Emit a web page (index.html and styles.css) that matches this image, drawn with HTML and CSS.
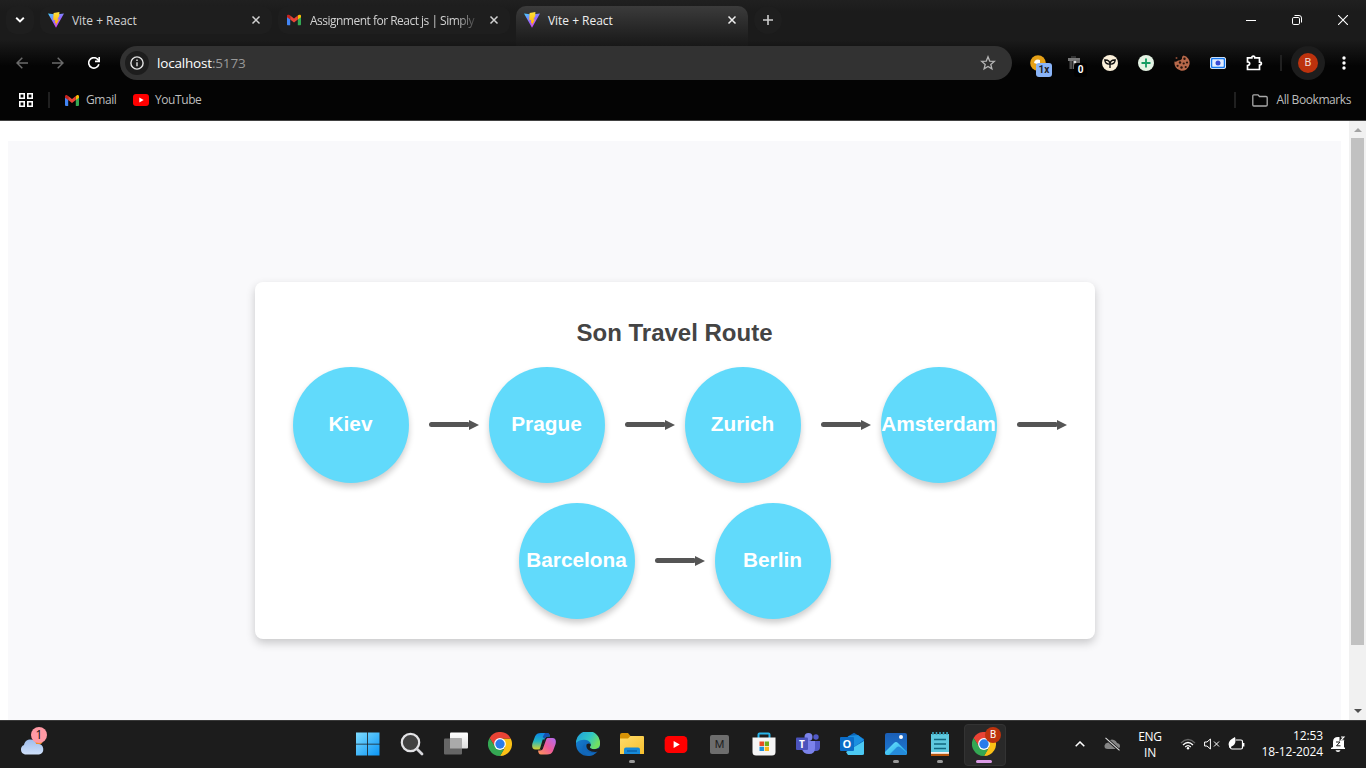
FILE: index.html
```html
<!DOCTYPE html>
<html lang="en">
<head>
<meta charset="utf-8">
<title>Vite + React</title>
<link rel="stylesheet" href="styles.css">
</head>
<body>
<svg class="defs" width="0" height="0" aria-hidden="true">
  <defs>
    <linearGradient id="va" x1="0" y1="0" x2=".6" y2="1"><stop offset="0" stop-color="#41d1ff"/><stop offset=".6" stop-color="#9a63ff"/><stop offset="1" stop-color="#d03cff"/></linearGradient>
    <linearGradient id="vb" x1="0" y1="0" x2="0" y2="1"><stop offset="0" stop-color="#ffe23a"/><stop offset="1" stop-color="#ffa800"/></linearGradient>
    <linearGradient id="win" x1="0" y1="0" x2="1" y2="1"><stop offset="0" stop-color="#7fdcff"/><stop offset="1" stop-color="#0a95f5"/></linearGradient>
    <linearGradient id="cloud" x1="0" y1="0" x2="0" y2="1"><stop offset="0" stop-color="#9fbdec"/><stop offset="1" stop-color="#cfe0fa"/></linearGradient>
    <linearGradient id="cpa" x1="0" y1="0" x2="0" y2="1"><stop offset="0" stop-color="#0a84e8"/><stop offset=".5" stop-color="#22b6c0"/><stop offset="1" stop-color="#d7d330"/></linearGradient>
    <linearGradient id="cpb" x1="1" y1="0" x2="0" y2="1"><stop offset="0" stop-color="#b06cf4"/><stop offset=".5" stop-color="#ee5b9b"/><stop offset="1" stop-color="#ff9a52"/></linearGradient>
    <linearGradient id="ea" x1="0" y1="0" x2="1" y2=".5"><stop offset="0" stop-color="#1c9be0"/><stop offset=".6" stop-color="#30c6c4"/><stop offset="1" stop-color="#72e060"/></linearGradient>
    <linearGradient id="eb" x1="0" y1="0" x2="1" y2="1"><stop offset="0" stop-color="#1787da"/><stop offset="1" stop-color="#0b4f9e"/></linearGradient>
    <linearGradient id="fo" x1="0" y1="0" x2="1" y2="1"><stop offset="0" stop-color="#ffdc6b"/><stop offset="1" stop-color="#f7bf2d"/></linearGradient>
    <linearGradient id="ph" x1="0" y1="0" x2="0" y2="1"><stop offset="0" stop-color="#1b5eb5"/><stop offset="1" stop-color="#1c7ad4"/></linearGradient>
    <linearGradient id="ph2" x1="0" y1="0" x2="1" y2="1"><stop offset="0" stop-color="#6fe3ff"/><stop offset="1" stop-color="#1aa6e6"/></linearGradient>
    <linearGradient id="tv" x1="0" y1="0" x2="0" y2="1"><stop offset="0" stop-color="#fff"/><stop offset="1" stop-color="#ddd"/></linearGradient>
    <symbol id="vite" viewBox="0 0 16 16"><path d="M0 1.4 8 15.8 16 1.4 8 2.6z" fill="url(#va)"/><path d="M11.4 0 5.6 1 5.2 8.2 7.2 7.8 6.8 11.2 8 10.8 7.6 14 11 7.4 9.3 7.6 11.2 4z" fill="url(#vb)"/></symbol>
    <symbol id="gmail" viewBox="0 0 14 11"><path d="M0 1.6V10a1 1 0 0 0 1 1h2.2V4z" fill="#4285f4"/><path d="M14 1.6V10a1 1 0 0 1-1 1h-2.2V4z" fill="#34a853"/><path d="M10.8 1 12 .2c.9-.6 2 0 2 1.2v1.3l-3.2 2.4z" fill="#fbbc04"/><path d="M3.2 1 2 .2C1.1-.4 0 .2 0 1.4v1.3l3.2 2.4z" fill="#c5221f"/><path d="M3.2 1 7 3.9 10.8 1v4.1L7 8 3.2 5.1z" fill="#ea4335"/></symbol>
    <symbol id="yt" viewBox="0 0 24 18"><rect width="24" height="18" rx="4.5" fill="#f00"/><path d="M9.5 5.2v7.6l6.5-3.8z" fill="#fff"/></symbol>
    <symbol id="chrome" viewBox="0 0 24 24"><path d="M12 6.5H22.7A12 12 0 0 1 12 24l5-9z" fill="#fbc116"/><path d="M1.6 6A12 12 0 0 1 22.7 6.5H12L7 14.8z" fill="#ea4335"/><path d="M1.6 6 7.2 14.8 12 17.5h4L12 24A12 12 0 0 1 1.6 6z" fill="#34a853"/><circle cx="12" cy="12" r="5.9" fill="#fff"/><circle cx="12" cy="12" r="4.7" fill="#2a7bea"/></symbol>
    <symbol id="x" viewBox="0 0 10 10"><path d="m1.500 1.500 7 7m0-7-7 7" stroke="currentColor" stroke-width="1.500"/></symbol>
  </defs>
</svg>
<div class="screen">
  <header class="browser">
    <div class="tabs">
      <button class="search"><svg width="10" height="6" viewBox="0 0 10 6"><path d="m1.200.8L5 4.500 8.800.8" fill="none" stroke="#fff" stroke-width="1.900"/></svg></button>
      <div class="tab"><svg class="fav"><use href="#vite"/></svg><span class="name">Vite + React</span><svg class="close"><use href="#x"/></svg></div>
      <div class="tab"><svg class="fav g" viewBox="-1 -2.5 16 16"><use href="#gmail" width="14" height="11"/></svg><span class="name fade">Assignment for React js | Simply</span><svg class="close"><use href="#x"/></svg></div>
      <div class="tab active"><svg class="fav"><use href="#vite"/></svg><span class="name">Vite + React</span><svg class="close"><use href="#x"/></svg></div>
      <button class="plus"><svg width="12" height="12" viewBox="0 0 12 12"><path d="M6 1v10M1 6h10" stroke="#ccc" stroke-width="1.6"/></svg></button>
      <div class="winctl">
        <svg width="10" height="10"><path d="M0 5.5h10" stroke="#fff"/></svg>
        <svg width="10" height="10" fill="none" stroke="#fff"><rect x=".5" y="2.5" width="7" height="7" rx="1.3"/><path d="M2.5.5H7A2.5 2.5 0 0 1 9.5 3v4.5"/></svg>
        <svg width="10" height="10"><path d="m0 0 10 10m0-10L0 10" stroke="#fff" stroke-width="1.1"/></svg>
      </div>
    </div>
    <div class="toolbar">
      <div class="nav">
        <svg width="12" height="12" fill="none" stroke="#6b6b6b" stroke-width="1.5"><path d="M12 6H1.2M6.3.7 1 6l5.3 5.3"/></svg>
        <svg width="12" height="12" fill="none" stroke="#6b6b6b" stroke-width="1.5"><path d="M0 6h10.8M5.7.7 11 6l-5.3 5.3"/></svg>
        <svg width="12" height="12" fill="none" stroke="#fff" stroke-width="1.6"><path d="M10.900 7.300A5.200 5.200 0 1 1 9.800 2.400L11 3.800"/><path d="M11.200 0v4.400H7"/></svg>
      </div>
      <div class="omnibox">
        <span class="info"><svg width="14" height="14" fill="none" stroke="#e3e3e3" stroke-width="1.4"><circle cx="7" cy="7" r="6.1"/><path d="M7 6.200v4M7 3.600v1.500"/></svg></span>
        <span class="url">localhost<i>:5173</i></span>
        <svg class="star" width="16" height="16" viewBox="0 0 16 16"><path d="m8 1.800 1.700 4.300 4.600.3-3.500 3 1.100 4.500L8 11.400l-3.900 2.500 1.100-4.500-3.500-3 4.600-.3z" fill="none" stroke="#b5b5b5" stroke-width="1.300"/></svg>
      </div>
      <div class="ext">
        <div class="cell"><svg width="16" height="16"><circle cx="8" cy="8" r="7.8" fill="#e6a117"/><path d="M4 8a4 4 0 0 1 6-3v5z" fill="#fff"/></svg><b class="badge blue">1x</b></div>
        <div class="cell"><svg width="14" height="16"><path d="M4 1h5v2H4z" fill="#333"/><path d="M1 3h12v3H1z" fill="#777"/><path d="M2.500 6h3v8h-3z" fill="#4e4e4e"/><path d="M6 5h7v9H6z" fill="#696969"/><circle cx="8" cy="7" r="1.300" fill="#ddd"/></svg><b class="badge black">0</b></div>
        <div class="cell"><svg width="16" height="16" fill="none" stroke="#111" stroke-width="1.400"><circle cx="8" cy="8" r="8" fill="#fbf0da" stroke="none"/><path d="M8 13V9M8 9C4.500 9.500 3 7.500 2.800 5 6 4.800 7.800 6.500 8 9zM8 9c3.500.5 5-1.500 5.200-4C10 4.800 8.200 6.500 8 9z"/></svg></div>
        <div class="cell"><svg width="16" height="16"><circle cx="8" cy="8" r="8" fill="#e4f3e4"/><path d="M8 3.500v9M3.500 8h9" stroke="#159c63" stroke-width="1.800"/></svg></div>
        <div class="cell"><svg width="16" height="16"><path d="M8 4Q7.500 1.500 9.500.600A7.600 7.600 0 1 1 .6 6.500Q3 7 4 5.500 5.500 6 8 4z" fill="#b7684a"/><circle cx="2.500" cy="3" r="1" fill="#8a4b35"/><g fill="#26130c"><circle cx="10.500" cy="3.800" r="1.200"/><circle cx="6" cy="7.500" r="1.200"/><circle cx="13" cy="7.500" r="1.100"/><circle cx="9.700" cy="8.500" r="1.100"/><circle cx="3.600" cy="10.800" r="1.100"/><circle cx="7.500" cy="12.500" r="1.200"/><circle cx="11.700" cy="12" r="1.100"/></g></svg></div>
        <div class="cell"><svg width="16" height="14"><rect x="0" y="1" width="16" height="12" rx="2.5" fill="#fff"/><rect x="1.5" y="2.5" width="13" height="9" rx="1.2" fill="#e3edff" stroke="#1677ee" stroke-width="1.5"/><circle cx="8" cy="7" r="2.5" fill="#3b4bd4"/></svg></div>
        <div class="cell"><svg width="17" height="16" fill="none" stroke="#fff" stroke-width="1.7"><path d="M1.500 2.800h4.300C5.800.5 8.800.5 8.800 2.800h4.700v4.300c2.500 0 2.500 3 0 3v4.400h-12v-4C4.400 10.200 4.400 6.800 1.500 6.800z"/></svg></div>
      </div>
      <span class="sep t"></span>
      <div class="profile"><b>B</b></div>
      <svg class="dots" width="4" height="14" fill="#fff"><circle cx="2" cy="2" r="1.7"/><circle cx="2" cy="7" r="1.7"/><circle cx="2" cy="12" r="1.7"/></svg>
    </div>
    <div class="marks">
      <svg class="apps" width="14" height="14" fill="none" stroke="#fff" stroke-width="1.6"><path d="M.8.8h4.400v4.400H.8zM8.800.8h4.400v4.400H8.800zM.8 8.800h4.400v4.400H.8zM8.800 8.800h4.400v4.400H8.800z"/></svg>
      <span class="sep"></span>
      <svg class="gm" width="14" height="11"><use href="#gmail"/></svg><span class="mk gmt">Gmail</span>
      <svg class="ytm" width="16" height="12"><use href="#yt"/></svg><span class="mk">YouTube</span>
      <span class="grow"></span>
      <span class="sep"></span>
      <svg class="folder" width="16" height="13" fill="none" stroke="#a9a9a9" stroke-width="1.3"><path d="M.8 11V1.700Q.8.8 1.700.8H6l1.500 1.700H14q1.200 0 1.200 1.100V11q0 1-1.200 1H1.800q-1 0-1-1z"/></svg><span class="mk all">All Bookmarks</span>
    </div>
  </header>

  <div class="viewport">
    <main class="app">
      <section class="card">
        <h2>Son Travel Route</h2>
        <div class="route">
          <div class="stop"><div class="city">Kiev</div><div class="arrow"></div></div>
          <div class="stop"><div class="city">Prague</div><div class="arrow"></div></div>
          <div class="stop"><div class="city">Zurich</div><div class="arrow"></div></div>
          <div class="stop"><div class="city">Amsterdam</div><div class="arrow"></div></div>
          <div class="stop"><div class="city">Barcelona</div><div class="arrow"></div></div>
          <div class="stop"><div class="city">Berlin</div></div>
        </div>
      </section>
    </main>
    <div class="scroll"><i class="up"></i><span class="thumb"></span><i class="down"></i></div>
  </div>

  <footer class="taskbar">
    <div class="weather"><svg width="24" height="20" viewBox="0 0 24 20"><circle cx="18" cy="5" r="5" fill="#f28c28"/><path d="M5 19.500a5 5 0 0 1-1-9.500C5 6 7 4.500 10.500 4.500c3 0 5 1.500 5.600 4.500H18a5.300 5.300 0 0 1 1 10.500z" fill="url(#cloud)"/></svg><span class="count">1</span></div>
    <div class="pins">
      <div class="pin"><svg width="24" height="24" fill="url(#win)"><path d="M0 .5h11.200v11.200H0zM12 .5h11.500v11.200H12zM0 12.500h11.200v11H0zM12 12.500h11.500v11H12z"/></svg></div>
      <div class="pin"><svg width="24" height="24"><circle cx="10.500" cy="10.500" r="8.700" fill="#414141" stroke="#e2e2e5" stroke-width="2.200"/><path d="m17 17 5 5" stroke="#d6d6da" stroke-width="2.800" stroke-linecap="round"/></svg></div>
      <div class="pin"><svg width="24" height="24"><rect x="6" y=".5" width="18" height="16" rx="1" fill="url(#tv)"/><rect y="6.500" width="18" height="16" rx="1" fill="#666"/><path d="M6 6.500h12v10H6z" fill="#aaa"/></svg></div>
      <div class="pin"><svg width="24" height="24"><use href="#chrome"/></svg></div>
      <div class="pin"><svg width="24" height="24"><path d="M9 1h6c2 0 2.500 1.500 3 3.500h-2c-2 0-2.800 1.300-3.300 3L10 15.500c-.5 1.800-1.300 2-2.500 2H3.500C.5 17.500-.4 15 .4 11.500L3 4.500C4 2 6 1 9 1z" fill="url(#cpa)"/><path d="M13 1h2c2 0 2.500 1.500 3 3.500h-2c-2 0-2.800 1-3.300 2.500L10.700 5z" fill="#174eb0"/><path d="M15 22.500H9c-2 0-2.500-1.500-3-4h2c2 0 2.800-1.300 3.300-3L14 8c.5-1.800 1.300-2 2.500-2h4c3 0 3.900 2.500 3.100 6L21 19c-1 2.500-3 3.500-6 3.500z" fill="url(#cpb)"/><path d="m10.700 7.500-2.500 8.500q-.3 1.300-1.600 1.500h3.200l3.300-10z" fill="#1d1d1d"/></svg></div>
      <div class="pin"><svg width="24" height="24"><circle cx="12" cy="12" r="12" fill="url(#eb)"/><path d="M0 11A12 12 0 0 1 24 11c.3 4-2.500 6-6 6-2.500 0-4.500-1-4-2.200 1-1 1-2 .7-3C13.500 7.500 5 6 0 11z" fill="url(#ea)"/><path d="M9 12c-2 6 3.500 10.500 11.500 8.500A12 12 0 0 1 13 24C6 22 4.500 15 9 12z" fill="#1268ba"/><path d="M10.500 12.500q2-1.500 4-.5.700 1.500-.5 2.800c-.7 2.200 4 3.500 8.500 1.500l1.500 1-2.500 2.500C15 20.500 9.500 18 10.500 12.500z" fill="#1d1d1d"/></svg></div>
      <div class="pin run"><svg width="24" height="24"><path d="M0 3q0-2 2-2h6l2.500 3H20v6H0z" fill="#d69205"/><path d="M0 6.500h8L10.500 4H23q1 0 1 1v17H0z" fill="url(#fo)"/><path d="M4 22v-4.500q0-2 2-2h12q2 0 2 2V22z" fill="#1689d8"/><path d="M7 19h10" stroke="#0b5fa6" stroke-width="1.400"/></svg></div>
      <div class="pin"><svg width="24" height="17"><use href="#yt"/></svg></div>
      <div class="pin"><span class="m">M</span></div>
      <div class="pin"><svg width="24" height="24"><path d="M6.500 6V2.500q0-1 1-1h9q1 0 1 1V6" fill="none" stroke="#27b4ea" stroke-width="2"/><path d="M.5 5.500h23V20q0 3.500-3.500 3.500H4Q.5 23.500.5 20z" fill="#f5f5f5"/><path d="M7.500 9.500H12V14H7.500z" fill="#e94c26"/><path d="M12.700 9.500H17V14h-4.300z" fill="#6fae1d"/><path d="M7.500 14.700H12V19H7.500z" fill="#1d91dd"/><path d="M12.700 14.700H17V19h-4.300z" fill="#f7b71a"/></svg></div>
      <div class="pin"><svg width="24" height="24"><circle cx="20" cy="5" r="2.700" fill="#5159c7"/><path d="M16 9h8v6q0 4-4 4h-4z" fill="#5159c7"/><circle cx="12.500" cy="5" r="4" fill="#7b83eb"/><path d="M6 9h13v7q0 6-6 6t-7-5z" fill="#7b83eb"/><rect y="5.500" width="12" height="12.500" rx="1" fill="#4b53bc"/><text x="6" y="15.500" class="ico-t" font-size="10">T</text></svg></div>
      <div class="pin"><svg width="24" height="24"><path d="M4 7 14 .8 24 7v14.500q0 1-1 1H8z" fill="#0a64b8"/><path d="m8 4 10-1 6 5-10 7z" fill="#1b8fe0"/><path d="M24 9v12.500q0 1.500-2 1.500H8l-2-3z" fill="#4cc9f2"/><rect y="5" width="14" height="14" rx="1" fill="#0b6cc7"/><text x="7" y="16" class="ico-t" font-size="11">O</text></svg></div>
      <div class="pin run"><svg width="24" height="24"><rect x="1" y="1" width="22" height="22" rx="2" fill="url(#ph)"/><path d="m1 20 9-9q2-2 4 0l9 9v1q0 2-2 2H3q-2 0-2-2z" fill="url(#ph2)"/><path d="m5 23 8-8q1.500-1 3 0l7 6q-.5 2-2 2z" fill="#258bda"/><circle cx="17" cy="5" r="2" fill="#fff"/></svg></div>
      <div class="pin run"><svg width="24" height="24"><path d="M3 2h18v20H3z" fill="#5fc9df"/><path d="M3 20h18v2H3z" fill="#f4f4f4"/><path d="M3 21.800h18V24H3z" fill="#b8560c"/><path d="M5 0v3m3.500-3v3M12 0v3m3.500-3v3M19 0v3" stroke="#3aa5be" stroke-width="1.600"/><path d="M6 7.500h12M6 12h12M6 16.500h12" stroke="#12677f" stroke-width="1.700"/></svg></div>
      <div class="pin current"><svg width="24" height="24"><use href="#chrome"/></svg><b class="user">B</b></div>
    </div>
    <div class="tray">
      <svg width="10" height="6"><path d="M.7 5.300 5 1l4.300 4.300" fill="none" stroke="#fff" stroke-width="1.500"/></svg>
      <svg class="od" width="17" height="14"><path d="M4 12q-4 0-3.500-3.500Q1 6 4 5.500 6 1.500 10 3q2.500 1 3 3 3 .5 3 3t-3 3z" fill="#858585"/><path d="m1.500 1 14 12.500" stroke="#1d1d1d" stroke-width="3"/><path d="m1.500.8 14 12.500" stroke="#ddd" stroke-width="1.100"/></svg>
      <span class="lang">ENG<br>IN</span>
      <svg class="wifi" width="16" height="12" fill="none" stroke="#fff" stroke-width="1.300"><path d="M1 5q7-7 14 0" stroke="#666"/><path d="M3 7q5-5 10 0M5.200 9q2.800-2.800 5.600 0"/><circle cx="8" cy="10.300" r="1.200" fill="#fff" stroke="none"/></svg>
      <svg class="vol" width="16" height="12" fill="none" stroke="#fff"><path d="M.6 4H3l3.400-3v10L3 8H.6zM10 3.500l5 5m0-5-5 5"/></svg>
      <svg class="bat" width="17" height="14" fill="none" stroke="#fff" stroke-width="1.200"><path d="M8 3h5q1.500 0 1.500 1.500v6Q14.500 12 13 12H4q-1.500 0-1.500-1.500V9"/><path d="M15.500 6v3.500" stroke-width="1.800"/><path d="M1 9q-2-5 6-9Q9 7 3.500 9.500L1 11" fill="#fff" stroke="none"/></svg>
      <span class="clock">12:53<br>18-12-2024</span>
      <svg class="bell" width="15" height="16"><path d="M2 11V6q0-5 5-5h1.500v4H13v6l1 1v1H0v-1z" fill="#fff"/><path d="M4.500 14.200h5q-.5 1.800-2.500 1.800t-2.500-1.800z" fill="#fff"/><path d="M10 1h3l-3 3.200h3.200" fill="none" stroke="#fff" stroke-width="1.100"/><path d="M5 6h4L5.500 9.800H9.500" fill="none" stroke="#1d1d1d"/></svg>
    </div>
  </footer>
</div>
</body>
</html>
```
FILE: styles.css
```css
* { box-sizing: border-box; }
body { margin: 0; overflow: hidden; font: 12px "Open Sans", "Noto Sans", sans-serif; }
svg { display: block; flex: none; }
.defs { position: absolute; }
button { border: 0; padding: 0; }
.screen { display: flex; flex-direction: column; width: 1366px; height: 768px; }

.browser { height: 121px; border-bottom: 1px solid #424242; color: #ccc; background: linear-gradient(#202020, #1b1b1b 12px, #1b1b1b 40px, #040404 66px, #040404); }
.tabs { height: 46px; padding: 6px 0 0 6px; display: flex; align-items: flex-start; }
.search, .plus { width: 28px; height: 28px; border-radius: 10px; background: #1e1e1e; display: grid; place-items: center; }
.search { margin-right: 6px; }
.plus { margin-left: 6px; border-radius: 14px; }
.tab { width: 232px; height: 28px; margin-right: 6px; padding: 0 11px 0 8px; border-radius: 10px; background: #1e1e1e; display: flex; align-items: center; color: #d2d2d2; }
.tab.active { height: 40px; padding-bottom: 12px; margin-right: 0; border-radius: 10px 10px 0 0; background: linear-gradient(#3b3b3b, #181818); color: #eee; }
.fav { width: 16px; height: 16px; margin-right: 8px; }
.name { flex: 1; white-space: nowrap; font-size: 12px; letter-spacing: -.03px; margin-right: 14px; }
.fade { letter-spacing: -.51px; -webkit-mask-image: linear-gradient(90deg, #000 145px, transparent 170px); mask-image: linear-gradient(90deg, #000 145px, transparent 170px); }
.close { width: 10px; height: 10px; }
.winctl { margin-left: auto; display: flex; height: 28px; }
.winctl svg { margin: 9px 18px; }

.toolbar { height: 34px; display: flex; align-items: center; padding-left: 4px; }
.nav, .ext { display: flex; }
.nav { margin-right: 8px; }
.nav svg { margin: 0 12px; }
.omnibox { width: 892px; height: 34px; border-radius: 17px; background: #323232; display: flex; align-items: center; padding: 0 16px 0 5px; }
.info { width: 24px; height: 24px; border-radius: 50%; background: #1d1d1d; display: grid; place-items: center; }
.url { margin-left: 8px; font-size: 13.5px; letter-spacing: -.18px; color: #fff; }
.url i { font-style: normal; color: #999; }
.star { margin-left: auto; }
.ext { margin-left: 8px; }
.cell { position: relative; width: 36px; height: 34px; display: grid; place-items: center; }
.badge { position: absolute; border-radius: 3px; font: bold 10px/14px Roboto, sans-serif; text-align: center; }
.blue { left: 16px; top: 17px; width: 16px; background: #8ab4f8; color: #222; }
.black { left: 18px; top: 17px; width: 13px; background: #000; color: #fff; }
.sep { width: 2px; height: 16px; background: #202020; }
.sep.t { margin-left: 8px; }
.profile { width: 34px; height: 34px; margin-left: 9px; border-radius: 50%; background: #1d1d1d; display: grid; place-items: center; }
.profile b { width: 20px; height: 20px; border-radius: 50%; background: #bd320d; color: #f2ddd6; font: 11px/20px Roboto, sans-serif; text-align: center; }
.dots { margin-left: 17px; }

.marks { height: 40px; display: flex; align-items: center; padding: 0 15px 0 19px; }
.marks .apps { margin-right: 15px; }
.mk { font-size: 12px; letter-spacing: -.42px; color: #bdbdbd; padding-bottom: 1px; }
.gm { margin: 0 7px 0 15px; }
.gmt { width: 32px; }
.ytm { margin: 0 6px 0 15px; }
.grow { flex: 1; }
.folder { margin: 0 8px 0 16px; }

.viewport { height: 599px; display: flex; background: #fff; }
.app { flex: 1; margin: 20px 8px 0; background: #f9f9fb; padding-top: 141px; overflow: hidden; }
.card { width: 840px; height: 357px; margin: 0 auto; padding: 37px 20px 0; border-radius: 8px; background: #fff; box-shadow: 0 4px 10px rgba(0,0,0,.2); font-family: "Liberation Sans", Arial, sans-serif; }
.card h2 { margin: 0; height: 28px; font-size: 24px; line-height: 28px; text-align: center; color: #444; }
.route { margin-top: 20px; display: flex; flex-wrap: wrap; justify-content: center; row-gap: 20px; }
.stop { display: flex; align-items: center; }
.city { width: 116px; height: 116px; margin: 0 10px; flex: none; padding-bottom: 2px; border-radius: 50%; background: #61dafb; color: #fff; display: flex; align-items: center; justify-content: center; font-size: 20.8px; font-weight: bold; box-shadow: 0 4px 6px rgba(0,0,0,.2); }
.arrow { display: flex; align-items: center; margin-left: 10px; }
.arrow::before { content: ""; width: 41px; height: 5px; border-radius: 3px; background: #555; margin: 0 -1px 1px 0; }
.arrow::after { content: ""; border: 5px solid transparent; border-left: 10px solid #555; border-right: 0; }
.scroll { width: 17px; background: #f1f1f1; display: flex; flex-direction: column; align-items: center; }
.up, .down { border: 4px solid transparent; }
.up { border-bottom-color: #a3a3a3; border-top: 0; margin: 7px 0 6px; }
.thumb { width: 13px; height: 507px; background: #c1c1c1; }
.down { border-top-color: #505050; border-bottom: 0; margin-top: 64px; }

.taskbar { height: 48px; border-top: 1px solid #393939; background: #1c1c1c; display: flex; color: #fff; }
.weather { position: relative; width: 346px; padding: 14px 0 0 20px; }
.count { position: absolute; left: 31px; top: 6px; width: 16px; height: 16px; border-radius: 50%; background: #ff99a4; color: #111; font-size: 12px; line-height: 16px; text-align: center; }
.pins { display: flex; }
.pin { position: relative; width: 44px; height: 47px; padding-bottom: 1px; display: grid; place-items: center; }
.pin > svg { margin-left: -1px; }
.m { width: 19px; height: 19px; margin-left: -1px; background: #6d6d6d; border-radius: 2px; color: #222; font: 11px/19px Roboto, sans-serif; text-align: center; }
.ico-t { fill: #fff; font-family: "Open Sans", sans-serif; font-weight: bold; text-anchor: middle; }
.run::after { content: ""; position: absolute; left: 19px; bottom: 5px; width: 6px; height: 3px; border-radius: 2px; background: #999; }
.current { isolation: isolate; }
.current::before { content: ""; position: absolute; z-index: -1; left: 2px; top: 3px; width: 40px; height: 40px; border: 1px solid #333; border-radius: 4px; background: #292929; }
.current::after { content: ""; position: absolute; left: 14px; bottom: 5px; width: 16px; height: 3px; border-radius: 2px; background: #db9be6; }
.user { position: absolute; left: 23px; top: 6px; width: 16px; height: 16px; border-radius: 50%; background: #bd320d; font: 10px/16px Roboto, sans-serif; text-align: center; }
.tray { flex: 1; display: flex; align-items: center; padding: 0 0 1px 69px; font-size: 12px; line-height: 16px; }
.od { margin-left: 19px; }
.lang { width: 46px; margin-left: 6px; text-align: center; padding-top: 2px; letter-spacing: -.3px; }
.wifi { margin-left: 7px; }
.vol { margin-left: 8px; }
.bat { margin-left: 8px; }
.clock { flex: 1; text-align: right; white-space: nowrap; letter-spacing: -.1px; }
.bell { margin: 0 20px 0 8px; }
```
